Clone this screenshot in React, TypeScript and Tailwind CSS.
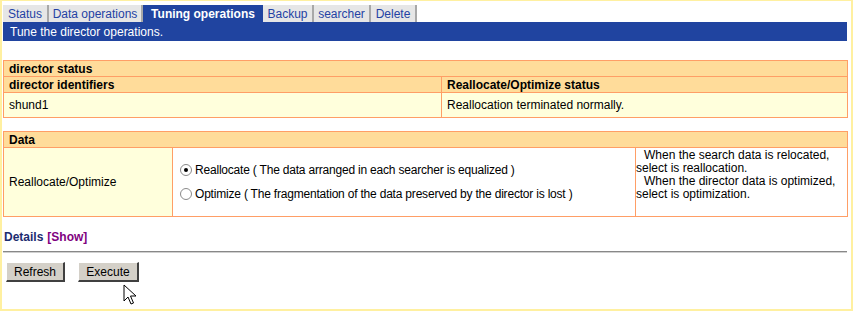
const tabs = [
  { label: 'Status', w: 'w-[46px]' },
  { label: 'Data operations', w: 'w-[94px]' },
  { label: 'Tuning operations', w: 'w-[120px]', active: true },
  { label: 'Backup', w: 'w-[51px]' },
  { label: 'searcher', w: 'w-[57px]' },
  { label: 'Delete', w: 'w-[46px]' },
]

function Radio({ checked }: { checked?: boolean }) {
  return (
    <span className="relative inline-block h-[12px] w-[12px] shrink-0 rounded-full border border-[#8a8a8a] bg-white">
      {checked && <span className="absolute left-[3px] top-[3px] h-[4px] w-[4px] rounded-full bg-black" />}
    </span>
  )
}

export default function App() {
  return (
    <div className="relative h-[311px] w-[853px] overflow-hidden border-b-2 border-l-2 border-r-2 border-t border-[#fff0a0] bg-white font-['Liberation_Sans',Arial,sans-serif] text-[12px] leading-[14px] text-black">
      <div className="ml-[1px] w-[844px] pt-[4px]">
        {/* tab strip */}
        <div className="flex h-[17px]">
          {tabs.map((t) => (
            <div
              key={t.label}
              className={
                t.active
                  ? `${t.w} flex items-center justify-center bg-[#2044a0] font-bold text-white`
                  : `${t.w} flex items-center justify-center border-r-2 border-[#a8a8a8] bg-[#e6e6e6] text-[#2442a4]`
              }
            >
              {t.label}
            </div>
          ))}
        </div>
        <div className="flex h-[19px] items-center bg-[#2044a0] pl-[7px] text-white">Tune the director operations.</div>

        {/* director status */}
        <table className="mt-[19px] w-[844px] table-fixed border-collapse border border-[#ff9e66]">
          <colgroup>
            <col className="w-[438px]" />
            <col className="w-[406px]" />
          </colgroup>
          <tbody>
            <tr className="h-[16px] bg-[#ffdc9a]">
              <td colSpan={2} className="border border-[#ff9e66] px-[5px] py-0 font-bold">director status</td>
            </tr>
            <tr className="h-[16px] bg-[#ffdc9a] font-bold">
              <td className="border border-[#ff9e66] px-[5px] py-0">director identifiers</td>
              <td className="border border-[#ff9e66] px-[5px] py-0">Reallocate/Optimize status</td>
            </tr>
            <tr className="h-[25px] bg-[#ffffdc]">
              <td className="border border-[#ff9e66] px-[5px] py-0">shund1</td>
              <td className="border border-[#ff9e66] px-[5px] py-0">Reallocation terminated normally.</td>
            </tr>
          </tbody>
        </table>

        {/* data */}
        <table className="mt-[13px] w-[844px] table-fixed border-collapse border border-[#ff9e66]">
          <colgroup>
            <col className="w-[169px]" />
            <col className="w-[463px]" />
            <col className="w-[212px]" />
          </colgroup>
          <tbody>
            <tr className="h-[16px] bg-[#ffdc9a]">
              <td colSpan={3} className="border border-[#ff9e66] px-[5px] py-0 font-bold">Data</td>
            </tr>
            <tr className="h-[69px]">
              <td className="border border-[#ff9e66] bg-[#ffffdc] px-[5px] py-0">Reallocate/Optimize</td>
              <td className="border border-[#ff9e66] bg-white px-[7px] py-0">
                <div className="flex flex-col gap-[10px] tracking-[-0.2px]">
                  <label className="flex items-center gap-[3px]">
                    <Radio checked />
                    <span>Reallocate ( The data arranged in each searcher is equalized )</span>
                  </label>
                  <label className="flex items-center gap-[3px]">
                    <Radio />
                    <span>Optimize ( The fragmentation of the data preserved by the director is lost )</span>
                  </label>
                </div>
              </td>
              <td className="border border-[#ff9e66] bg-white p-0 pt-[1px] align-top leading-[13px]">
                <div className="pl-[8px]">When the search data is relocated,</div>
                <div>select is reallocation.</div>
                <div className="pl-[8px]">When the director data is optimized,</div>
                <div>select is optimization.</div>
              </td>
            </tr>
          </tbody>
        </table>

        <div className="mt-[13px] flex h-[14px] items-center gap-[4px] pl-[1px] font-bold">
          <span className="text-[#1c2c70]">Details</span>
          <span className="text-[#800080]">[Show]</span>
        </div>

        <div className="mt-[7px] h-[2px] border-b border-t border-b-[#d0d0d0] border-t-[#888888]" />

        <div className="mt-[9px] flex gap-[13px] pl-[3px]">
          <button className="h-[20px] w-[59px] border-b-2 border-l border-r-2 border-t border-b-[#404040] border-l-[#ffffff] border-r-[#404040] border-t-[#ffffff] bg-[#d4d0c8] text-[12px] text-black">
            Refresh
          </button>
          <button className="h-[20px] w-[61px] border-b-2 border-l border-r-2 border-t border-b-[#404040] border-l-[#ffffff] border-r-[#404040] border-t-[#ffffff] bg-[#d4d0c8] text-[12px] text-black">
            Execute
          </button>
        </div>
      </div>

      {/* mouse pointer */}
      <svg className="absolute left-[121px] top-[283px]" width="14" height="22" viewBox="0 0 14 22">
        <path d="M1 1 L1 17 L5 13 L8 20 L10.5 19 L7.5 12 L13 12 Z" fill="white" stroke="black" strokeWidth="1" strokeLinejoin="miter" />
      </svg>
    </div>
  )
}
